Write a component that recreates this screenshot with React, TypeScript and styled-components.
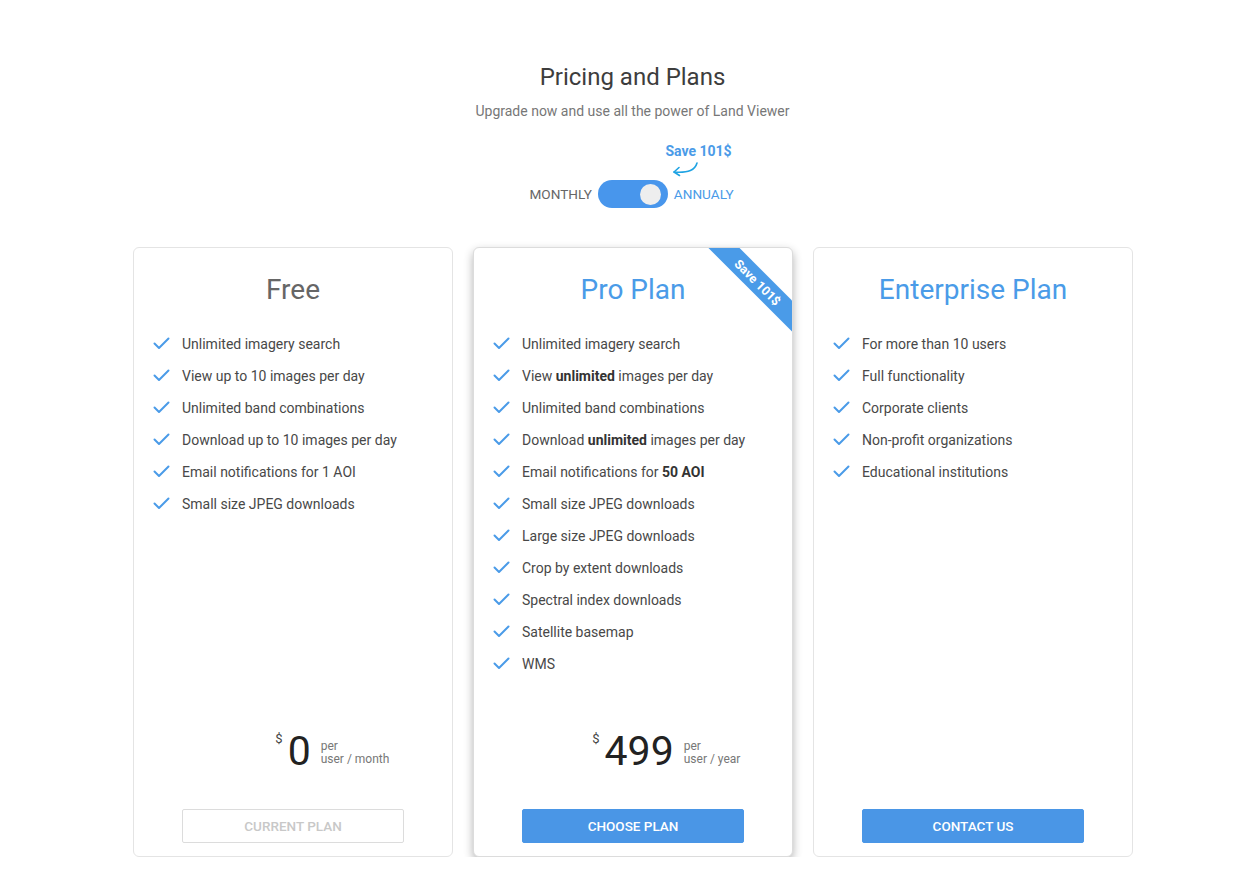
import React from "react";
import styled, { createGlobalStyle } from "styled-components";

const Global = createGlobalStyle`
  html, body { margin: 0; padding: 0; background: #fff; }
  body { font-family: Roboto, "Liberation Sans", Arial, sans-serif; color: #444; }
`;

const Page = styled.div`
  width: 1233px;
  box-sizing: border-box;
  padding-left: 32px;
  display: flex;
  flex-direction: column;
  align-items: center;
  padding-top: 62px;
`;

const Title = styled.h1`
  margin: 0;
  font-size: 24px;
  font-weight: 400;
  color: #3d3d3d;
  line-height: 30px;
`;

const Subtitle = styled.p`
  margin: 9px 0 0;
  font-size: 14px;
  color: #777;
  line-height: 20px;
`;

const SwitchArea = styled.div`
  position: relative;
  margin-top: 59px;
  margin-left: -2px;
  display: flex;
  align-items: center;
  gap: 6px;
`;

const SaveNote = styled.div`
  position: absolute;
  left: 136px;
  top: -37px;
  font-size: 14px;
  font-weight: 700;
  color: #4a9be8;
  white-space: nowrap;
`;

const Arrow = styled.svg`
  position: absolute;
  left: 142px;
  top: -18px;
`;

const Label = styled.span<{ $active?: boolean }>`
  font-size: 13.6px;
  color: ${(p) => (p.$active ? "#4a9be8" : "#666")};
`;

const Toggle = styled.div`
  width: 70px;
  height: 28px;
  border-radius: 14px;
  background: #4896ec;
  display: flex;
  align-items: center;
  justify-content: flex-end;
  padding-right: 7px;
  box-sizing: border-box;
`;

const Knob = styled.div`
  width: 21px;
  height: 21px;
  border-radius: 50%;
  background: #eeeeee;
`;

const Cards = styled.div`
  margin-top: 39px;
  display: grid;
  grid-template-columns: repeat(3, 320px);
  gap: 20px;
  margin-left: 1px;
`;

const Card = styled.div<{ $featured?: boolean }>`
  position: relative;
  height: 610px;
  box-sizing: border-box;
  border: 1px solid ${(p) => (p.$featured ? "#dcdcdc" : "#e4e4e4")};
  border-radius: 6px;
  background: #fff;
  box-shadow: ${(p) => (p.$featured ? "0 4px 10px rgba(0,0,0,0.3)" : "none")};
  overflow: hidden;
  display: flex;
  flex-direction: column;
  align-items: center;
  padding-top: 24px;
`;

const PlanName = styled.h2<{ $muted?: boolean }>`
  margin: 0;
  font-size: 28px;
  font-weight: 400;
  line-height: 36px;
  color: ${(p) => (p.$muted ? "#666" : "#4a9be8")};
`;

const Features = styled.ul`
  list-style: none;
  margin: 20px 0 0;
  padding: 0 0 0 19px;
  align-self: stretch;
  flex: 1;
`;

const Feature = styled.li`
  display: flex;
  align-items: center;
  height: 32px;
  font-size: 14px;
  color: #484848;
  b { font-weight: 700; color: #333; }
`;

const Check = styled.svg`
  width: 17px;
  height: 14px;
  margin-right: 12px;
  flex-shrink: 0;
`;

const PriceRow = styled.div`
  position: relative;
  display: flex;
  align-items: flex-start;
  height: 44px;
  margin-bottom: 39px;
`;

const Currency = styled.span`
  font-size: 13px;
  color: #444;
  margin-top: 5px;
  margin-right: 5px;
`;

const Amount = styled.span`
  font-size: 41px;
  line-height: 50px;
  color: #222;
`;

const Per = styled.span`
  position: absolute;
  left: 100%;
  top: 14px;
  margin-left: 10px;
  font-size: 12px;
  line-height: 13px;
  color: #777;
  white-space: nowrap;
`;

const Button = styled.button<{ $ghost?: boolean }>`
  width: 222px;
  height: 34px;
  margin-bottom: 13px;
  border-radius: 2px;
  font-family: Roboto, "Liberation Sans", Arial, sans-serif;
  font-size: 13.5px;
  font-weight: 500;
  text-transform: uppercase;
  cursor: pointer;
  border: 1px solid ${(p) => (p.$ghost ? "#dcdcdc" : "#4a96e6")};
  background: ${(p) => (p.$ghost ? "#fff" : "#4a96e6")};
  color: ${(p) => (p.$ghost ? "#c8c8c8" : "#fff")};
`;

const Ribbon = styled.div`
  position: absolute;
  top: 23px;
  right: -41px;
  width: 150px;
  height: 22px;
  transform: rotate(45deg);
  background: #4a9be8;
  color: #fff;
  font-size: 12.5px;
  font-weight: 700;
  display: flex;
  align-items: center;
  justify-content: center;
`;

type Plan = {
  name: string;
  muted?: boolean;
  featured?: boolean;
  features: React.ReactNode[];
  price: string;
  per: string;
  button: string;
  ghost?: boolean;
  showPrice: boolean;
};

const plans: Plan[] = [
  {
    name: "Free",
    muted: true,
    features: [
      "Unlimited imagery search",
      "View up to 10 images per day",
      "Unlimited band combinations",
      "Download up to 10 images per day",
      "Email notifications for 1 AOI",
      "Small size JPEG downloads",
    ],
    price: "0",
    per: "user / month",
    button: "Current plan",
    ghost: true,
    showPrice: true,
  },
  {
    name: "Pro Plan",
    featured: true,
    features: [
      "Unlimited imagery search",
      <>View <b>unlimited</b> images per day</>,
      "Unlimited band combinations",
      <>Download <b>unlimited</b> images per day</>,
      <>Email notifications for <b>50 AOI</b></>,
      "Small size JPEG downloads",
      "Large size JPEG downloads",
      "Crop by extent downloads",
      "Spectral index downloads",
      "Satellite basemap",
      "WMS",
    ],
    price: "499",
    per: "user / year",
    button: "Choose plan",
    showPrice: true,
  },
  {
    name: "Enterprise Plan",
    features: [
      "For more than 10 users",
      "Full functionality",
      "Corporate clients",
      "Non-profit organizations",
      "Educational institutions",
    ],
    price: "",
    per: "",
    button: "Contact us",
    showPrice: false,
  },
];

const CheckIcon = () => (
  <Check viewBox="0 0 17 14">
    <path d="M1.5 6.5 L6 11 L15.5 1.5" fill="none" stroke="#4a9be8" strokeWidth="2" strokeLinecap="round" strokeLinejoin="round" />
  </Check>
);

export default function App() {
  return (
    <>
      <Global />
      <Page>
        <Title>Pricing and Plans</Title>
        <Subtitle>Upgrade now and use all the power of Land Viewer</Subtitle>
        <SwitchArea>
          <SaveNote>Save 101$</SaveNote>
          <Arrow width="30" height="20" viewBox="0 0 30 20">
            <path d="M26 1 C24 8 18 11 3 10" fill="none" stroke="#1fa3e3" strokeWidth="1.6" strokeLinecap="round" />
            <path d="M8 5.5 L3 10 L8.5 13.5" fill="none" stroke="#1fa3e3" strokeWidth="1.6" strokeLinecap="round" strokeLinejoin="round" />
          </Arrow>
          <Label>MONTHLY</Label>
          <Toggle>
            <Knob />
          </Toggle>
          <Label $active>ANNUALY</Label>
        </SwitchArea>
        <Cards>
          {plans.map((p) => (
            <Card key={p.name} $featured={p.featured}>
              {p.featured && <Ribbon>Save 101$</Ribbon>}
              <PlanName $muted={p.muted}>{p.name}</PlanName>
              <Features>
                {p.features.map((f, i) => (
                  <Feature key={i}>
                    <CheckIcon />
                    <span>{f}</span>
                  </Feature>
                ))}
              </Features>
              {p.showPrice && (
                <PriceRow>
                  <Currency>$</Currency>
                  <Amount>{p.price}</Amount>
                  <Per>
                    per
                    <br />
                    {p.per}
                  </Per>
                </PriceRow>
              )}
              <Button $ghost={p.ghost}>{p.button}</Button>
            </Card>
          ))}
        </Cards>
      </Page>
    </>
  );
}
